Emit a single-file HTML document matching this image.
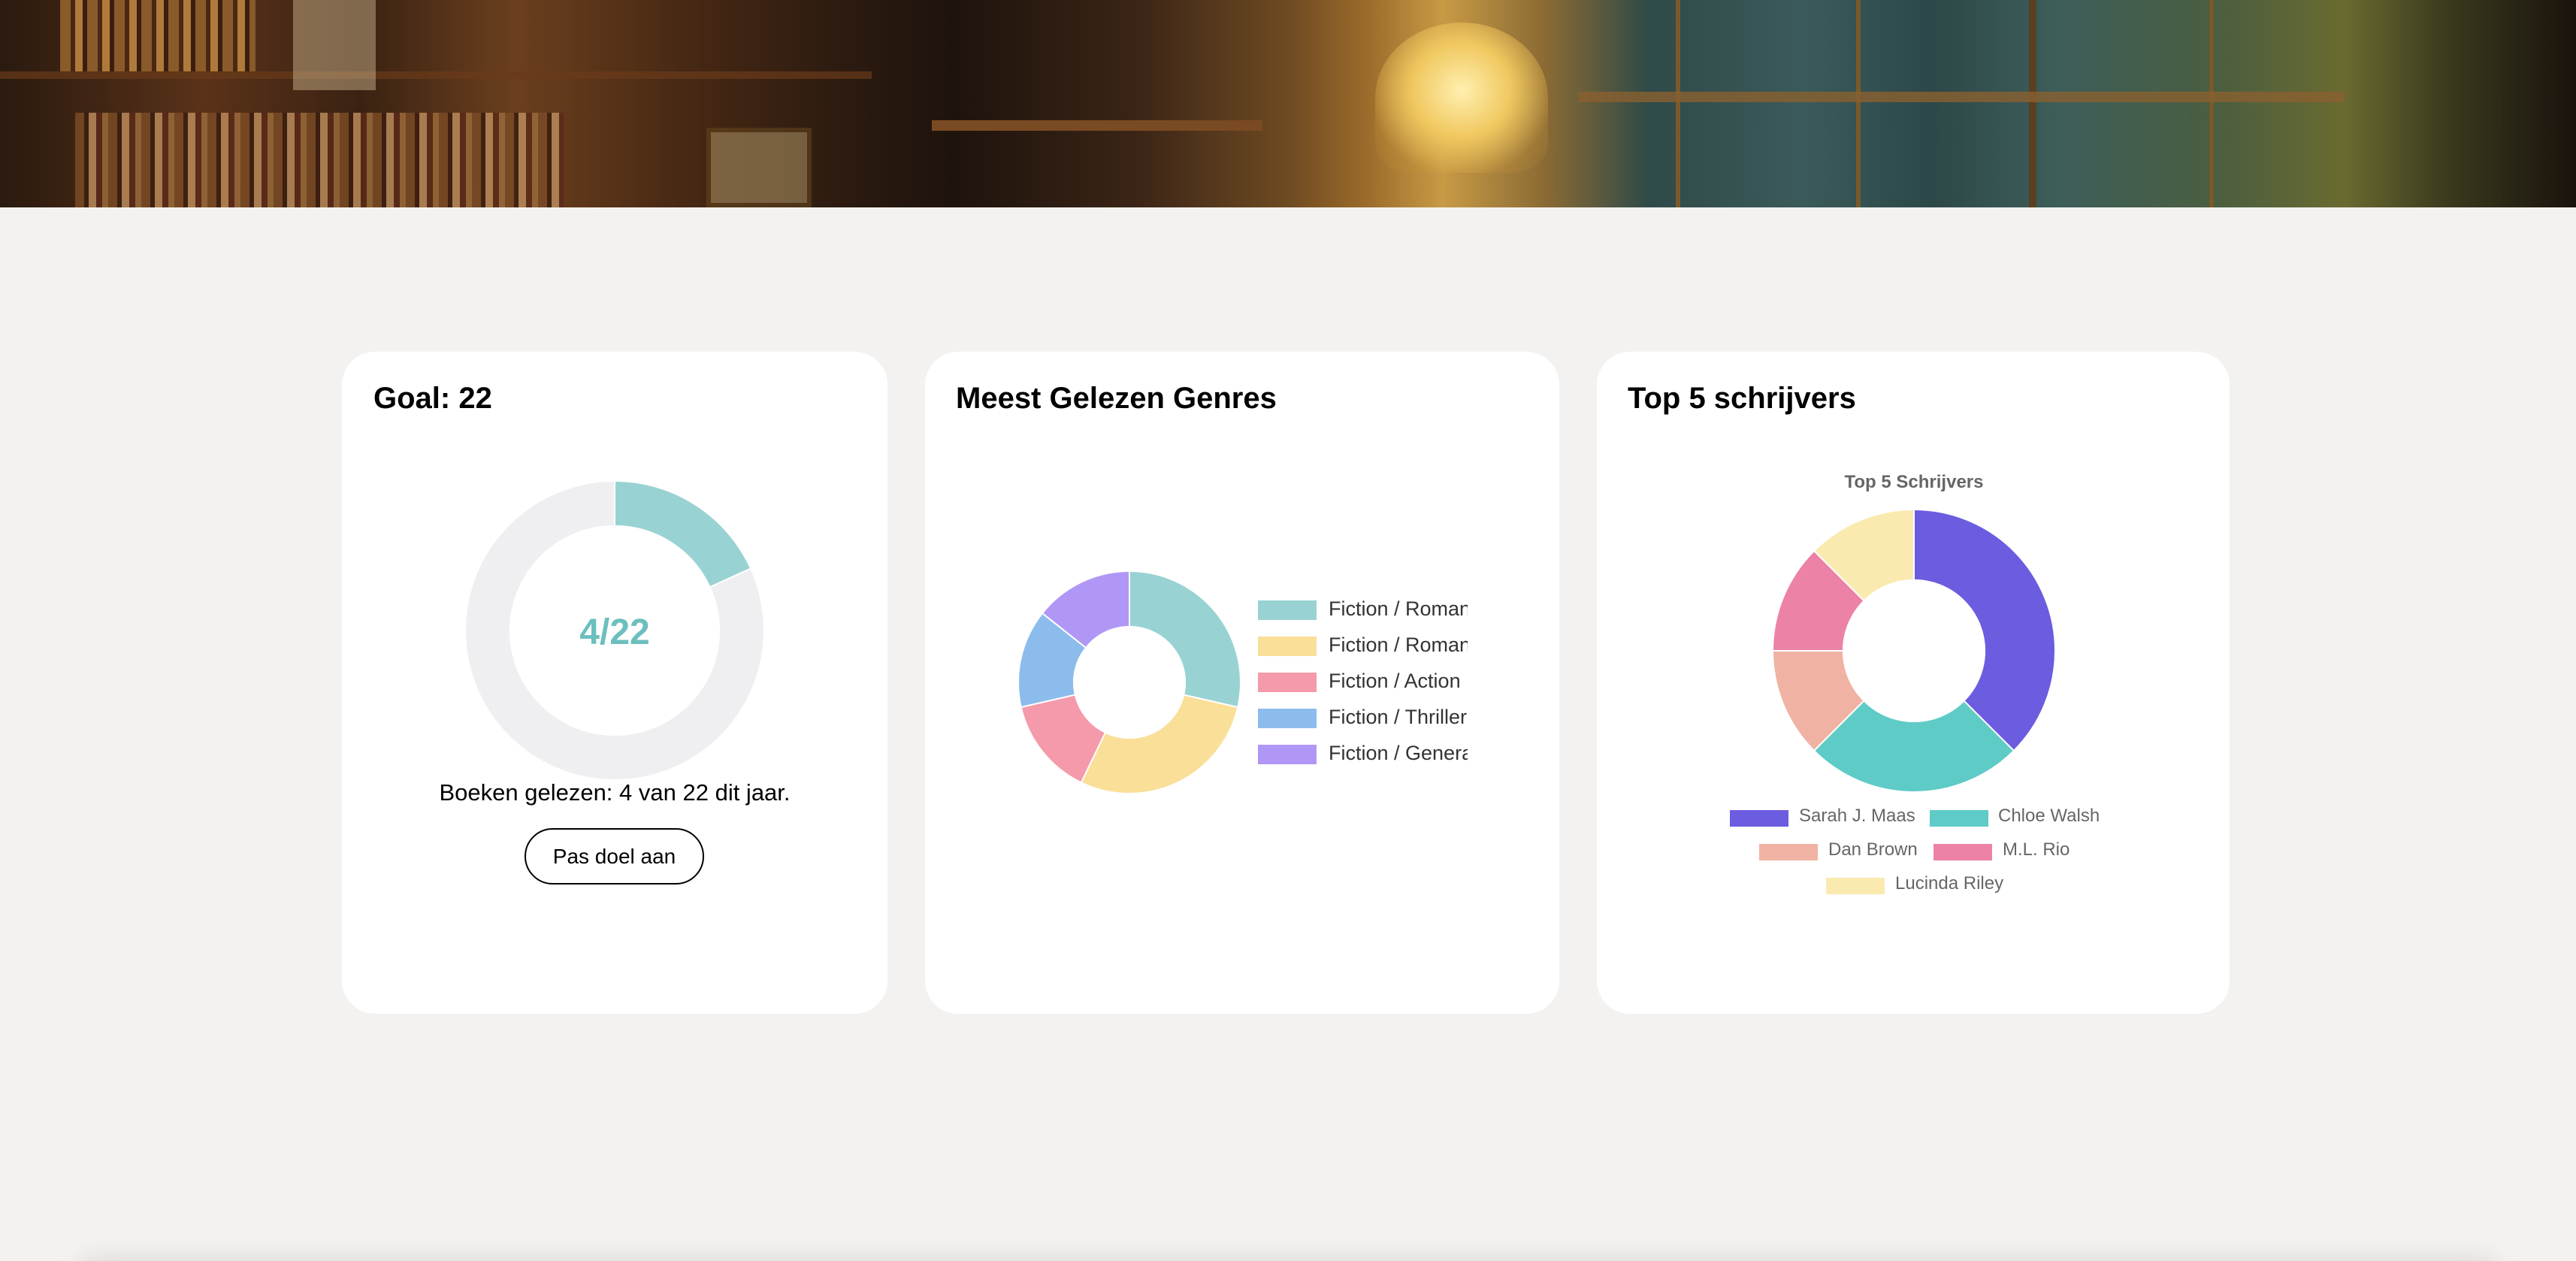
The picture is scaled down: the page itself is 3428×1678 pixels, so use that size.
<!DOCTYPE html>
<html><head><meta charset="utf-8"><style>
*{margin:0;padding:0;box-sizing:border-box}
html{width:3428px;height:1678px;overflow:hidden}
body{width:3428px;height:1678px;background:#f3f2f0;font-family:"Liberation Sans",Arial,sans-serif;position:relative;overflow:hidden}
.banner{position:absolute;left:0;top:0;width:3428px;height:276px;overflow:hidden;background:linear-gradient(90deg,#2a1a0f 0%,#5a3219 8%,#3a2212 14%,#6b3f1e 20%,#4a2a14 26%,#2b1a10 33%,#1e130c 37%,#3a2416 44%,#6e4a22 50%,#9a6a2a 53%,#c89a45 56%,#8a6a34 60%,#2f4a48 64%,#3b5a5a 70%,#2c4848 75%,#3e5e5a 80%,#4a5e40 86%,#6a6a30 91%,#3a3a1e 95%,#1a120c 100%)}
.b{position:absolute}
.card{position:absolute;top:468px;height:881px;background:#fff;border-radius:44px}
.t{position:absolute;font-weight:bold;font-size:40px;color:#000}
.lg{position:absolute;font-size:27px;color:#333;white-space:nowrap;overflow:hidden}
.sw{position:absolute;width:78px;height:26px}
.l3{position:absolute;font-size:24px;color:#666;white-space:nowrap}
.s3{position:absolute;width:78px;height:22px}
</style></head><body>
<div class="banner">
 <div class="b" style="left:0;top:95px;width:1160px;height:10px;background:#6a3a1a;opacity:.7"></div>
 <div class="b" style="left:80px;top:0;width:260px;height:95px;background:repeating-linear-gradient(90deg,#8a5a2a 0 14px,#4a2814 14px 20px,#b07a3a 20px 30px,#3a1e10 30px 36px)"></div>
 <div class="b" style="left:100px;top:150px;width:650px;height:126px;background:repeating-linear-gradient(90deg,#7a4a24 0 12px,#3a1e10 12px 18px,#b98a5a 18px 28px,#5a2a18 28px 36px,#9a6a3a 36px 44px);opacity:.85"></div>
 <div class="b" style="left:390px;top:0;width:110px;height:120px;background:#c8b08a;opacity:.5"></div>
 <div class="b" style="left:940px;top:170px;width:140px;height:106px;background:#b8a070;opacity:.5;border:6px solid #6a4a20"></div>
 <div class="b" style="left:1240px;top:160px;width:440px;height:14px;background:#7a4a22"></div>
 <div class="b" style="left:1830px;top:30px;width:230px;height:200px;background:radial-gradient(ellipse at 50% 45%,#fff0b0 0%,#f0c860 40%,rgba(200,150,60,.25) 75%,transparent 100%);border-radius:50% 50% 20% 20%"></div>
 <div class="b" style="left:2230px;top:0;width:6px;height:276px;background:#7a5a2a"></div>
 <div class="b" style="left:2470px;top:0;width:6px;height:276px;background:#7a5a2a"></div>
 <div class="b" style="left:2700px;top:0;width:10px;height:276px;background:#5a4020"></div>
 <div class="b" style="left:2940px;top:0;width:6px;height:276px;background:#7a5a2a"></div>
 <div class="b" style="left:2100px;top:122px;width:1020px;height:14px;background:#8a6030;opacity:.8"></div>
</div>

<div class="card" style="left:455px;width:726px">
 <div class="t" style="left:42px;top:40px">Goal: 22</div>
 <svg style="position:absolute;left:0;top:0" width="726" height="881">
  <circle cx="363" cy="371" r="169" fill="none" stroke="#efeff1" stroke-width="58"/>
  <circle cx="363" cy="371" r="169" fill="none" stroke="#99d2d2" stroke-width="58" stroke-dasharray="193.1 2000" transform="rotate(-90 363 371)"/>
  <line x1="363" y1="371" x2="363" y2="170" stroke="#fff" stroke-width="2"/>
  <line x1="363" y1="371" x2="545" y2="288" stroke="#fff" stroke-width="2"/>
  <circle cx="363" cy="371" r="140" fill="#fff"/>
  <text x="363" y="389" text-anchor="middle" font-family="Liberation Sans, Arial, sans-serif" font-weight="bold" font-size="48" fill="#6bbfbf">4/22</text>
 </svg>
 <div style="position:absolute;left:0;width:726px;top:569px;text-align:center;font-size:31px;color:#000">Boeken gelezen: 4 van 22 dit jaar.</div>
 <div style="position:absolute;left:243px;top:634px;width:239px;height:75px;border:2px solid #000;border-radius:38px;text-align:center;line-height:71px;font-size:28px;color:#000">Pas doel aan</div>
</div>

<div class="card" style="left:1231px;width:844px">
 <div class="t" style="left:41px;top:40px">Meest Gelezen Genres</div>
 <svg style="position:absolute;left:0;top:0" width="844" height="881">
  <g transform="rotate(-90 272 440)">
   <circle cx="272" cy="440" r="111" fill="none" stroke="#99d2d2" stroke-width="72" stroke-dasharray="199.3 2000"/>
   <circle cx="272" cy="440" r="111" fill="none" stroke="#fadf98" stroke-width="72" stroke-dasharray="0 199.3 199.3 2000"/>
   <circle cx="272" cy="440" r="111" fill="none" stroke="#f49aaa" stroke-width="72" stroke-dasharray="0 398.6 99.6 2000"/>
   <circle cx="272" cy="440" r="111" fill="none" stroke="#8cbcec" stroke-width="72" stroke-dasharray="0 498.2 99.6 2000"/>
   <circle cx="272" cy="440" r="111" fill="none" stroke="#b197f5" stroke-width="72" stroke-dasharray="0 597.8 99.6 2000"/>
  </g>
  <g stroke="#fff" stroke-width="2">
   <line x1="272" y1="440" x2="272" y2="292"/>
   <line x1="272" y1="440" x2="416" y2="473"/>
   <line x1="272" y1="440" x2="208" y2="573"/>
   <line x1="272" y1="440" x2="128" y2="473"/>
   <line x1="272" y1="440" x2="156" y2="348"/>
  </g>
  <circle cx="272" cy="440" r="75" fill="#fff"/>
 </svg>
 <div class="sw" style="left:443px;top:331px;background:#99d2d2"></div>
 <div class="sw" style="left:443px;top:379px;background:#fadf98"></div>
 <div class="sw" style="left:443px;top:427px;background:#f49aaa"></div>
 <div class="sw" style="left:443px;top:475px;background:#8cbcec"></div>
 <div class="sw" style="left:443px;top:523px;background:#b197f5"></div>
 <div class="lg" style="left:537px;top:327px;width:185px">Fiction / Romance</div>
 <div class="lg" style="left:537px;top:375px;width:185px">Fiction / Romance</div>
 <div class="lg" style="left:537px;top:423px;width:185px">Fiction / Action</div>
 <div class="lg" style="left:537px;top:471px;width:185px">Fiction / Thriller</div>
 <div class="lg" style="left:537px;top:519px;width:185px">Fiction / General</div>
</div>

<div class="card" style="left:2125px;width:842px">
 <div class="t" style="left:41px;top:40px">Top 5 schrijvers</div>
 <div style="position:absolute;left:0;width:844px;top:160px;text-align:center;font-size:24px;font-weight:bold;color:#666">Top 5 Schrijvers</div>
 <svg style="position:absolute;left:0;top:0" width="842" height="881">
  <g transform="rotate(-90 422 398)">
   <circle cx="422" cy="398" r="141" fill="none" stroke="#6b5ce0" stroke-width="92" stroke-dasharray="332.2 2000"/>
   <circle cx="422" cy="398" r="141" fill="none" stroke="#5ecbc6" stroke-width="92" stroke-dasharray="0 332.2 221.5 2000"/>
   <circle cx="422" cy="398" r="141" fill="none" stroke="#f0b3a3" stroke-width="92" stroke-dasharray="0 553.7 110.7 2000"/>
   <circle cx="422" cy="398" r="141" fill="none" stroke="#ec82a6" stroke-width="92" stroke-dasharray="0 664.4 110.7 2000"/>
   <circle cx="422" cy="398" r="141" fill="none" stroke="#fbeab0" stroke-width="92" stroke-dasharray="0 775.1 110.8 2000"/>
  </g>
  <g stroke="#fff" stroke-width="2">
   <line x1="422" y1="398" x2="422" y2="208"/>
   <line x1="422" y1="398" x2="556" y2="532"/>
   <line x1="422" y1="398" x2="288" y2="532"/>
   <line x1="422" y1="398" x2="232" y2="398"/>
   <line x1="422" y1="398" x2="288" y2="264"/>
  </g>
  <circle cx="422" cy="398" r="95" fill="#fff"/>
 </svg>
 <div class="s3" style="left:177px;top:610px;background:#6b5ce0"></div>
 <div class="l3" style="left:269px;top:604px">Sarah J. Maas</div>
 <div class="s3" style="left:443px;top:610px;background:#5ecbc6"></div>
 <div class="l3" style="left:534px;top:604px">Chloe Walsh</div>
 <div class="s3" style="left:216px;top:655px;background:#f0b3a3"></div>
 <div class="l3" style="left:308px;top:649px">Dan Brown</div>
 <div class="s3" style="left:448px;top:655px;background:#ec82a6"></div>
 <div class="l3" style="left:540px;top:649px">M.L. Rio</div>
 <div class="s3" style="left:305px;top:700px;background:#fbeab0"></div>
 <div class="l3" style="left:397px;top:694px">Lucinda Riley</div>
</div>

<div style="position:absolute;left:0;top:1620px;width:3428px;height:58px;overflow:hidden">
 <div style="position:absolute;left:100px;top:58px;width:3228px;height:60px;background:#e8e7e5;border-radius:30px;box-shadow:0 -8px 30px rgba(0,0,0,.08)"></div>
</div>
</body></html>
